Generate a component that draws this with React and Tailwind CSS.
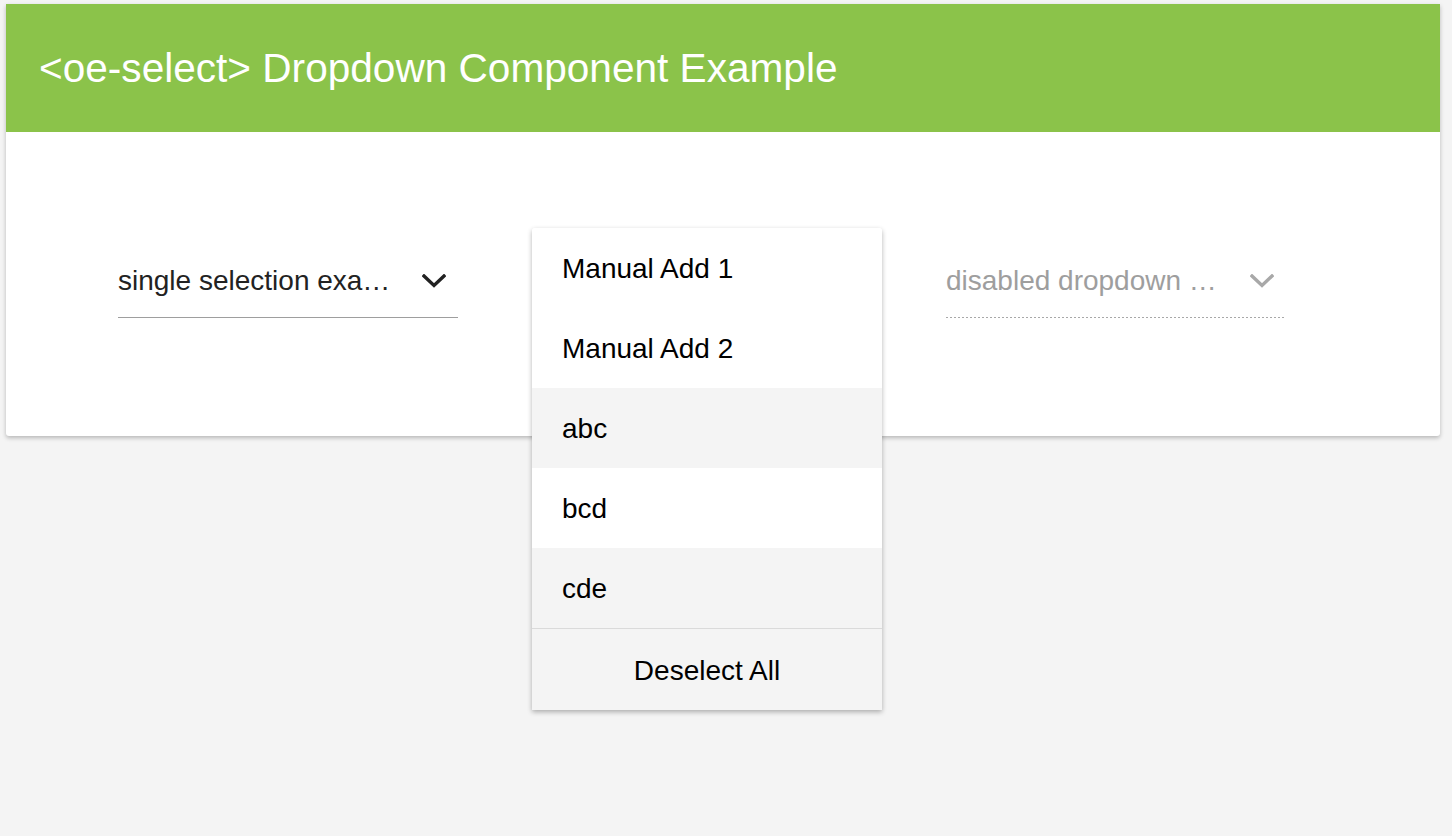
import React from "react";

const Chevron = ({ className }) => (
  <svg width="24" height="14" viewBox="0 0 24 14" className={className}>
    <polyline points="2,2 12,11.5 22,2" fill="none" stroke="currentColor" strokeWidth="3.4" strokeLinecap="square" />
  </svg>
);

const options = [
  { label: "Manual Add 1", selected: false },
  { label: "Manual Add 2", selected: false },
  { label: "abc", selected: true },
  { label: "bcd", selected: false },
  { label: "cde", selected: true },
];

export default function App() {
  return (
    <div className="min-h-[836px] bg-[#f4f4f4] pt-[4px] [font-family:'Liberation_Sans',Arial,sans-serif]">
      <div className="ml-[6px] w-[1434px] rounded-b-[3px] bg-white shadow-[0_2px_4px_rgba(0,0,0,0.25)]">
        {/* header */}
        <div className="flex h-[128px] items-center bg-[#8bc34a] pl-[33px]">
          <h1 className="text-[40.6px] leading-none text-white">&lt;oe-select&gt; Dropdown Component Example</h1>
        </div>

        <div className="flex h-[304px] pl-[112px] pt-[129px]">
          {/* single selection */}
          <div className="w-[340px]">
            <div className="flex h-[40px] items-center justify-between pr-[12px] text-[28px] text-[#222]">
              <span>single selection exa…</span>
              <Chevron className="text-[#222]" />
            </div>
            <div className="mt-[16px] h-px bg-[#9e9e9e]" />
          </div>

          {/* multi select, open */}
          <div className="relative ml-[74px] w-[350px]">
            <div className="h-[57px]" />
            <div className="absolute left-0 top-[-33px] z-10 w-[350px] overflow-hidden rounded-t-[3px] bg-white shadow-[0_2px_5px_rgba(0,0,0,0.3)]">
              {options.map((o) => (
                <div
                  key={o.label}
                  className={`flex h-[80px] items-center pl-[30px] pt-[2px] text-[28px] text-black ${o.selected ? "bg-[#f4f4f4]" : "bg-white"}`}
                >
                  {o.label}
                </div>
              ))}
              <div className="flex h-[82px] items-center justify-center border-t border-[#dadada] bg-[#f4f4f4] pt-[2px] text-[28px] text-black">
                Deselect All
              </div>
            </div>
          </div>

          {/* disabled */}
          <div className="ml-[64px] w-[340px]">
            <div className="flex h-[40px] items-center justify-between pr-[12px] text-[28px] text-[#9e9e9e]">
              <span>disabled dropdown …</span>
              <Chevron className="text-[#a8a8a8]" />
            </div>
            <div className="mt-[16px] h-px bg-[linear-gradient(to_right,#a8a8a8_2px,transparent_2px)] bg-[length:4px_1px] bg-repeat-x" />
          </div>
        </div>
      </div>
    </div>
  );
}
